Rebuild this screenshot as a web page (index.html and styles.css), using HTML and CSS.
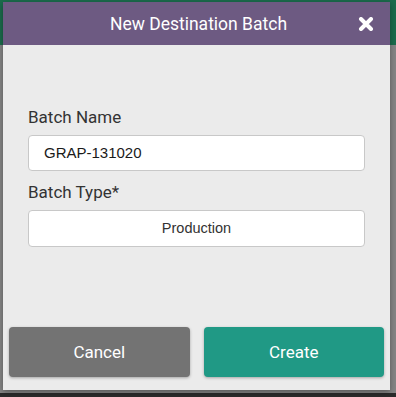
FILE: index.html
```html
<html>
<head>
<title>New Destination Batch</title>
<link rel="stylesheet" href="styles.css">
</head>
<body>

<div class="backdrop">
  <div class="dialog">
    <div class="dialog-head">
      <span class="dialog-title">New Destination Batch</span>
      <svg class="dialog-close" width="16" height="14" viewBox="0 0 16 14">
        <path d="M3 2 L13 12 M13 2 L3 12" stroke="#fff" stroke-width="4" stroke-linecap="round" fill="none"/>
      </svg>
    </div>

    <div class="dialog-body">
      <label class="field-label">Batch Name</label>
      <div class="field-input">GRAP-131020</div>

      <label class="field-label">Batch Type*</label>
      <div class="field-input field-select">Production</div>
    </div>

    <div class="dialog-foot">
      <button class="btn btn-cancel">Cancel</button>
      <button class="btn btn-create">Create</button>
    </div>
  </div>
</div>

</body>
</html>
```

FILE: styles.css
```css
/*-----------------------------------------------------------------*/
body {
    margin:             0;
    font-family:        Roboto, "Liberation Sans", sans-serif;
    background:         #2b2b2b;
}

/*-----------------------------------------------------------------*/
.backdrop {
    height:             393px;
    background:         linear-gradient(#1b6b4c 0, #1b6b4c 45px, #858585 45px);
    padding:            2px 6px 0 3px;
    box-sizing:         border-box;
}

/*-----------------------------------------------------------------*/
.dialog {
    height:             388px;
    background:         #ebebeb;
    display:            flex;
    flex-direction:     column;
    box-shadow:         0 2px 6px rgba(0,0,0,0.35);
}

.dialog-head {
    height:             43px;
    background:         #6d5a82;
    color:              #fff;
    display:            flex;
    align-items:        center;
    justify-content:    center;
    position:           relative;
}

.dialog-title {
    font-size:          17.5px;
    padding-left:       4px;
}

.dialog-close {
    position:           absolute;
    right:              16px;
    top:                15px;
}

/*-----------------------------------------------------------------*/
.dialog-body {
    flex:               1;
    padding:            60px 25px 0 25px;
}

.field-label {
    display:            block;
    font-size:          17px;
    color:              #333;
    line-height:        24px;
    margin-bottom:      6px;
}

.field-input {
    height:             34px;
    line-height:        34px;
    background:         #fff;
    border:             1px solid #c8c8c8;
    border-radius:      4px;
    padding-left:       15px;
    font-family:        "Liberation Sans", Arial, sans-serif;
    font-size:          15px;
    color:              #1a1a1a;
    margin-bottom:      9px;
}

.field-select {
    text-align:         center;
    padding-left:       0;
    font-size:          14.5px;
    height:             35px;
    line-height:        35px;
    color:              #333;
}

/*-----------------------------------------------------------------*/
.dialog-foot {
    display:            flex;
    gap:                14px;
    padding:            0 6px 13px 6px;
}

.btn {
    flex:               1;
    height:             50px;
    border:             0;
    border-radius:      4px;
    color:              #fff;
    font-family:        Roboto, sans-serif;
    font-size:          17px;
    box-shadow:         0 1px 3px rgba(0,0,0,0.3);
}

.btn-cancel {
    background:         #737373;
}

.btn-create {
    background:         #209985;
}
```
